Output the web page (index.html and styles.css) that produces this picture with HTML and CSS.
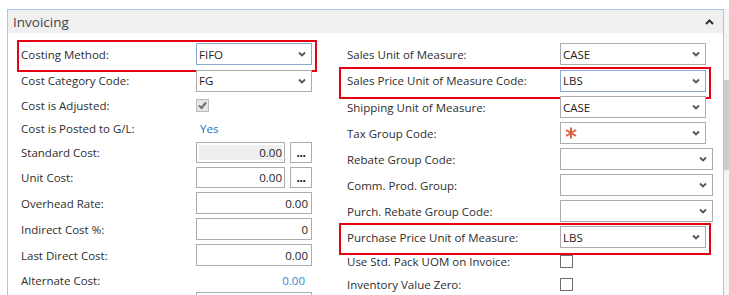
FILE: index.html
```html
<!DOCTYPE html>
<html>
<head>
<meta charset="utf-8">
<link rel="stylesheet" href="styles.css">
</head>
<body>
<div class="page">
  <div class="panel">
    <div class="panel-head">
      <span class="title">Invoicing</span>
      <svg class="collapse" width="9" height="6" viewBox="0 0 9 6"><path d="M1 5 L4.5 1.5 L8 5" fill="none" stroke="#333" stroke-width="2"/></svg>
    </div>
    <div class="panel-body">
      <div class="col col-left">
        <div class="row h26 hl">
          <span class="label">Costing Method:</span>
          <div class="sel focus"><span>FIFO</span><svg class="chev" width="8" height="6" viewBox="0 0 8 6"><path d="M1 1.5 L4 4.5 L7 1.5" fill="none" stroke="#555" stroke-width="1.8"/></svg></div>
        </div>
        <div class="row h27">
          <span class="label">Cost Category Code:</span>
          <div class="sel"><span>FG</span><svg class="chev" width="8" height="6" viewBox="0 0 8 6"><path d="M1 1.5 L4 4.5 L7 1.5" fill="none" stroke="#555" stroke-width="1.8"/></svg></div>
        </div>
        <div class="row h23">
          <span class="label">Cost is Adjusted:</span>
          <div class="check disabled"><svg width="11" height="11" viewBox="0 0 11 11"><path d="M2 5.5 L4.5 8 L9 2.5" fill="none" stroke="#707070" stroke-width="2"/></svg></div>
        </div>
        <div class="row h23">
          <span class="label">Cost is Posted to G/L:</span>
          <span class="link">Yes</span>
        </div>
        <div class="row h24">
          <span class="label">Standard Cost:</span>
          <div class="num short readonly"><span>0.00</span></div>
          <div class="assist">...</div>
        </div>
        <div class="row h26">
          <span class="label">Unit Cost:</span>
          <div class="num short"><span>0.00</span></div>
          <div class="assist">...</div>
        </div>
        <div class="row h26">
          <span class="label">Overhead Rate:</span>
          <div class="num"><span>0.00</span></div>
        </div>
        <div class="row h26">
          <span class="label">Indirect Cost %:</span>
          <div class="num"><span>0</span></div>
        </div>
        <div class="row h26">
          <span class="label">Last Direct Cost:</span>
          <div class="num"><span>0.00</span></div>
        </div>
        <div class="row h24">
          <span class="label">Alternate Cost:</span>
          <span class="link value-right">0.00</span>
        </div>
        <div class="row h22">
          <span class="label"></span>
          <div class="num"><span></span></div>
        </div>
      </div>
      <div class="col col-right">
        <div class="row h26">
          <span class="label">Sales Unit of Measure:</span>
          <div class="sel r"><span>CASE</span><svg class="chev" width="8" height="6" viewBox="0 0 8 6"><path d="M1 1.5 L4 4.5 L7 1.5" fill="none" stroke="#555" stroke-width="1.8"/></svg></div>
        </div>
        <div class="row h27 hl">
          <span class="label">Sales Price Unit of Measure Code:</span>
          <div class="sel r focus"><span>LBS</span><svg class="chev" width="8" height="6" viewBox="0 0 8 6"><path d="M1 1.5 L4 4.5 L7 1.5" fill="none" stroke="#555" stroke-width="1.8"/></svg></div>
        </div>
        <div class="row h26">
          <span class="label">Shipping Unit of Measure:</span>
          <div class="sel r"><span>CASE</span><svg class="chev" width="8" height="6" viewBox="0 0 8 6"><path d="M1 1.5 L4 4.5 L7 1.5" fill="none" stroke="#555" stroke-width="1.8"/></svg></div>
        </div>
        <div class="row h26">
          <span class="label">Tax Group Code:</span>
          <div class="sel r"><svg class="req" width="12" height="12" viewBox="0 0 12 12"><path d="M6 0.5 L6 11.5 M1 3 L11 9 M1 9 L11 3" fill="none" stroke="#e0603c" stroke-width="2"/></svg><svg class="chev" width="8" height="6" viewBox="0 0 8 6"><path d="M1 1.5 L4 4.5 L7 1.5" fill="none" stroke="#555" stroke-width="1.8"/></svg></div>
        </div>
        <div class="row h26">
          <span class="label">Rebate Group Code:</span>
          <div class="sel wide"><span></span><svg class="chev" width="8" height="6" viewBox="0 0 8 6"><path d="M1 1.5 L4 4.5 L7 1.5" fill="none" stroke="#555" stroke-width="1.8"/></svg></div>
        </div>
        <div class="row h26">
          <span class="label">Comm. Prod. Group:</span>
          <div class="sel wide"><span></span><svg class="chev" width="8" height="6" viewBox="0 0 8 6"><path d="M1 1.5 L4 4.5 L7 1.5" fill="none" stroke="#555" stroke-width="1.8"/></svg></div>
        </div>
        <div class="row h26">
          <span class="label">Purch. Rebate Group Code:</span>
          <div class="sel wide"><span></span><svg class="chev" width="8" height="6" viewBox="0 0 8 6"><path d="M1 1.5 L4 4.5 L7 1.5" fill="none" stroke="#555" stroke-width="1.8"/></svg></div>
        </div>
        <div class="row h26 hl">
          <span class="label">Purchase Price Unit of Measure:</span>
          <div class="sel r"><span>LBS</span><svg class="chev" width="8" height="6" viewBox="0 0 8 6"><path d="M1 1.5 L4 4.5 L7 1.5" fill="none" stroke="#555" stroke-width="1.8"/></svg></div>
        </div>
        <div class="row h23">
          <span class="label">Use Std. Pack UOM on Invoice:</span>
          <div class="check"></div>
        </div>
        <div class="row h23">
          <span class="label">Inventory Value Zero:</span>
          <div class="check"></div>
        </div>
      </div>
    </div>
  </div>
  <div class="scroll"><div class="thumb"></div></div>
</div>
</body>
</html>
```
FILE: styles.css
```css
* { box-sizing: border-box; }
html, body { margin: 0; padding: 0; }
body {
  font-family: "Segoe UI", "Open Sans", "Noto Sans", sans-serif;
  font-size: 11.5px;
  color: #2e2e2e;
  background: #fff;
  overflow: hidden;
  width: 729px;
  height: 295px;
}
.page {
  display: flex;
  align-items: flex-start;
  padding: 9px 0 0 7px;
  height: 295px;
}
.panel {
  width: 717px;
  height: 286px;
  border: 1px solid #a6c4ec;
  border-bottom: none;
  overflow: hidden;
}
.panel-head {
  height: 23px;
  background: #f0f0f0;
  display: flex;
  align-items: center;
  justify-content: space-between;
  padding: 0 9px 0 5px;
}
.title { font-size: 13.5px; color: #444; }
.collapse { display: block; }
.panel-body {
  display: flex;
  padding-top: 8px;
}
.col { display: flex; flex-direction: column; align-items: flex-start; }
.col-left { padding-left: 13px; }
.col-right { margin-left: 35px; }
.row {
  display: flex;
  align-items: center;
  position: relative;
}
.h22 { height: 22px; align-items: flex-start; }
.h23 { height: 23px; }
.h24 { height: 24px; }
.h26 { height: 26px; }
.h27 { height: 27px; }
.label { white-space: nowrap; color: #2e2e2e; }
.col-left .label { width: 175px; }
.col-right .label { width: 213px; }
.row.hl::after {
  content: "";
  position: absolute;
  left: -4px;
  right: -5px;
  top: calc(50% - 14px);
  height: 28px;
  border: 2px solid #e60012;
  pointer-events: none;
}
.col-right .row.hl::after { left: -8px; }
.sel {
  width: 116px;
  height: 22px;
  border: 1px solid #acacac;
  background: #fff;
  display: flex;
  align-items: center;
  justify-content: space-between;
  padding: 0 5px 0 2px;
  color: #222;
}
.sel.focus { border-color: #8aa9d2; }
.sel.r { width: 146px; }
.sel.wide { width: 153px; }
.chev { display: block; }
.req { display: block; margin-left: 2px; }
.num {
  width: 116px;
  height: 22px;
  border: 1px solid #acacac;
  background: #fff;
  display: flex;
  align-items: center;
  justify-content: flex-end;
  padding-right: 3px;
  color: #222;
}
.num.short { width: 89px; height: 21px; padding-right: 2px; }
.num.readonly {
  background: #efefef;
  box-shadow: inset 0 0 0 2px #fff;
}
.assist {
  width: 22px;
  height: 21px;
  margin-left: 5px;
  border: 1px solid #acacac;
  background: #fff;
  font-weight: bold;
  font-size: 12px;
  line-height: 20px;
  text-align: center;
  color: #111;
  letter-spacing: -0.5px;
}
.check {
  width: 13px;
  height: 13px;
  border: 1px solid #6e6e6e;
  background: #fff;
  display: flex;
  align-items: center;
  justify-content: center;
}
.check.disabled { border-color: #bcbcbc; background: #e6e6e6; }
.check svg { display: block; }
.link { color: #2b6cc4; padding-left: 4px; }
.value-right { width: 116px; text-align: right; padding-right: 7px; color: #3a7fd5; }
.scroll {
  width: 5px;
  height: 286px;
  background: #f5f5f5;
  padding-top: 71px;
}
.thumb { height: 90px; background: #cdcdcd; }
```
